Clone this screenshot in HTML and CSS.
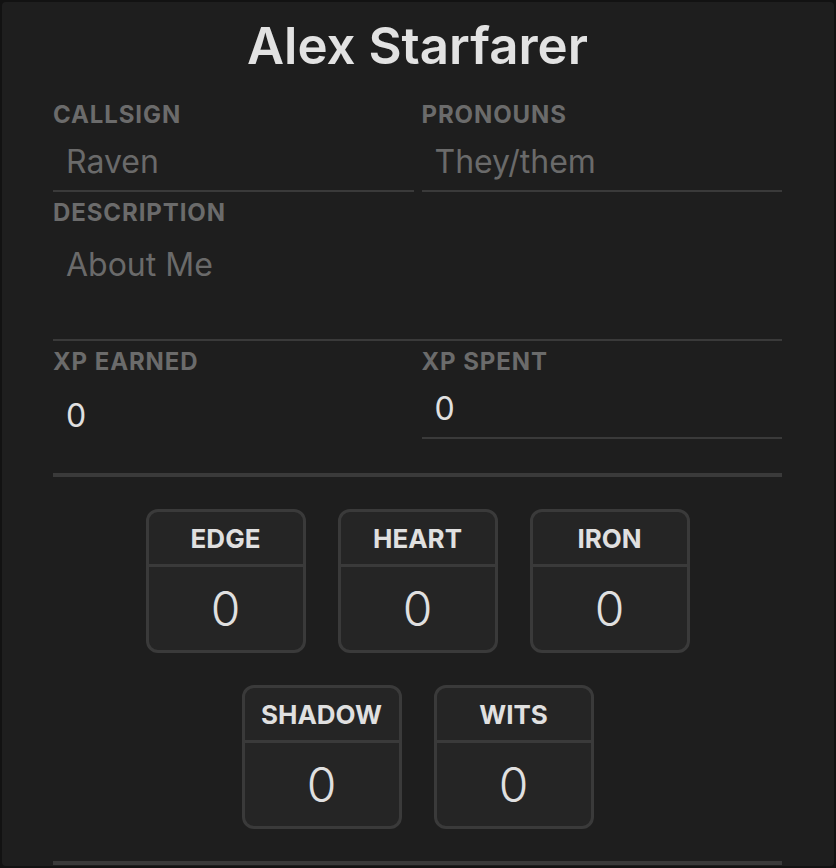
FILE: index.html
```html
<!DOCTYPE html>
<html lang="en">
<head>
<meta charset="utf-8">
<title>Alex Starfarer</title>
<link rel="stylesheet" href="styles.css">
</head>
<body>
<div class="sheet">
  <h1 class="name">Alex Starfarer</h1>
  <div class="fields">
    <div class="field">
      <label class="field-label">Callsign</label>
      <input class="field-input" type="text" placeholder="Raven">
    </div>
    <div class="field">
      <label class="field-label">Pronouns</label>
      <input class="field-input" type="text" placeholder="They/them">
    </div>
    <div class="field field-wide">
      <label class="field-label">Description</label>
      <textarea class="field-text" placeholder="About Me"></textarea>
    </div>
    <div class="field">
      <label class="field-label">XP Earned</label>
      <input class="field-input field-plain" type="text" value="0">
    </div>
    <div class="field">
      <label class="field-label">XP Spent</label>
      <input class="field-input" type="text" value="0">
    </div>
  </div>
  <div class="divider"></div>
  <div class="stats">
    <div class="stat"><div class="stat-name">EDGE</div><div class="stat-value">0</div></div>
    <div class="stat"><div class="stat-name">HEART</div><div class="stat-value">0</div></div>
    <div class="stat"><div class="stat-name">IRON</div><div class="stat-value">0</div></div>
    <div class="stat"><div class="stat-name">SHADOW</div><div class="stat-value">0</div></div>
    <div class="stat"><div class="stat-name">WITS</div><div class="stat-value">0</div></div>
  </div>
  <div class="divider divider-bottom"></div>
</div>
</body>
</html>
```
FILE: styles.css
```css
* { box-sizing: border-box; }

html, body {
  margin: 0;
  padding: 0;
  background: #121212;
  font-family: Inter, "Noto Sans", sans-serif;
}

body {
  padding: 2px;
  height: 868px;
  overflow: hidden;
}

.sheet {
  width: 832px;
  height: 864px;
  background: #1e1e1e;
  border-radius: 4px;
  padding: 15px 52px 0 51px;
  overflow: hidden;
}

.name {
  margin: 0;
  font-size: 51px;
  line-height: 58px;
  font-weight: 600;
  color: #e2e2e2;
  text-align: center;
}

.fields {
  margin-top: 25px;
  display: grid;
  grid-template-columns: 1fr 1fr;
  column-gap: 8px;
  row-gap: 6px;
}

.field {
  display: flex;
  flex-direction: column;
  min-width: 0;
}

.field-wide {
  grid-column: 1 / -1;
}

.field-label {
  display: block;
  font-size: 24px;
  line-height: 29px;
  font-weight: 700;
  letter-spacing: 0.9px;
  text-transform: uppercase;
  color: #6b6b6b;
}

.field-input,
.field-text {
  width: 100%;
  background: transparent;
  border: none;
  border-bottom: 2px solid #3a3a3a;
  outline: none;
  font-family: Inter, "Noto Sans", sans-serif;
  font-size: 32px;
  color: #e0e0e0;
  margin: 0;
}

.field-input {
  height: 63px;
  padding: 3px 13px 0;
}

.field-plain {
  border-bottom-color: transparent;
  padding-top: 17px;
}

.field-text {
  height: 114px;
  padding: 18px 13px 0;
  line-height: 39px;
  resize: none;
  overflow: hidden;
  display: block;
}

.field-input::placeholder,
.field-text::placeholder {
  color: #6a6a6a;
  opacity: 1;
}

.divider {
  height: 4px;
  background: #3a3a3a;
  margin-top: 34px;
}

.divider-bottom {
  margin-top: 32px;
}

.stats {
  margin-top: 32px;
  display: flex;
  flex-wrap: wrap;
  justify-content: center;
  gap: 32px;
}

.stat {
  width: 160px;
  height: 144px;
  border: 3px solid #3a3a3a;
  border-radius: 12px;
  background: #252525;
  display: flex;
  flex-direction: column;
}

.stat-name {
  height: 55px;
  border-bottom: 3px solid #3a3a3a;
  font-size: 26px;
  line-height: 54px;
  font-weight: 700;
  text-align: center;
  color: #e0e0e0;
}

.stat-value {
  flex: 1;
  display: flex;
  align-items: center;
  justify-content: center;
  font-size: 48px;
  font-weight: 300;
  color: #e0e0e0;
}
```
